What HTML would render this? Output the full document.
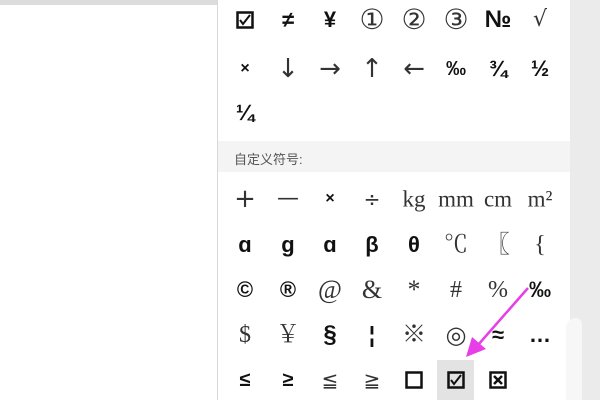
<!DOCTYPE html><html><head><meta charset="utf-8"><style>
body{margin:0;width:600px;height:400px;overflow:hidden;background:#fff;position:relative;font-family:"Liberation Sans","Noto Sans CJK SC",sans-serif}
.s{position:absolute;width:42px;text-align:center;color:#111;line-height:1;transform:translate(-21px,-50%)}
.f{font-family:"Liberation Serif","Noto Serif CJK SC",serif;color:#333;font-weight:normal}
.b{font-weight:bold}
.l{font-family:"DejaVu Sans",sans-serif;font-weight:normal;color:#333}
</style></head><body>
<div style="position:absolute;left:0;top:0;width:217px;height:5px;background:#dcdcdc"></div>
<div style="position:absolute;left:217px;top:0;width:1px;height:400px;background:#d8d8d8"></div>
<div style="position:absolute;left:570px;top:0;width:30px;height:400px;background:#ebebeb"></div>
<div style="position:absolute;left:566px;top:318px;width:16px;height:82px;background:#f7f7f7;border-radius:10px 6px 0 0"></div>
<div style="position:absolute;left:218px;top:141px;width:352px;height:31px;background:#f4f4f4"></div>
<div style="position:absolute;left:234px;top:149px;font-size:13px;color:#555">自定义符号:</div>
<div style="position:absolute;left:437px;top:360px;width:37px;height:40px;background:#e3e3e3"></div>
<div id="g"></div>
<svg style="position:absolute;left:0;top:0" width="600" height="400" fill="none" stroke="#111">
<rect x="237.5" y="12.5" width="15" height="15" stroke-width="2.5"/><path d="M240 20l3 4 7-9" stroke-width="2"/>
<rect x="406.5" y="372.5" width="15" height="15" stroke-width="2.5"/>
<rect x="448.5" y="372.5" width="15" height="15" stroke-width="2.5"/><path d="M451 380l3 4 7-9" stroke-width="2"/>
<rect x="490.5" y="372.5" width="15" height="15" stroke-width="2.5"/><path d="M494 376l8 8M502 376l-8 8" stroke-width="2.5"/>
<line x1="528" y1="288" x2="478" y2="345" stroke="#e83ee8" stroke-width="2.5"/><polygon points="466,357 472,337 486,349" fill="#e83ee8" stroke="none"/></svg>
<script>
const cols=[245,288,330,372,414,456,498,540];
const rows=[
[20,[["",""],["≠","b",22],["¥","b",22],["①","l",28],["②","l",28],["③","l",28],["№","b",24],["√","l",22]]],
[69,[["×","b",16],["↓","l",26],["→","l",26],["↑","l",26],["←","l",26],["‰","b",20],["¾","b",22],["½","b",22]]],
[113,[["¼","b",22]]],
[199,[["+","l",26],["—","l",22],["×","b",16],["÷","l",20],["kg","f",23],["mm","f",23],["cm","f",23],["m²","f",23]]],
[245,[["ɑ","b",22],["g","b",22],["ɑ","b",22],["β","b",22],["θ","b",22],["℃","f",24],["〖","f",24],["{","f",24]]],
[290,[["©","b",22],["®","b",22],["@","f",26],["&","f",26],["*","f",26],["#","f",24],["%","f",24],["‰","b",22]]],
[335,[["$","f",24],["￥","f",24],["§","b",24],["¦","b",22],["※","f",24],["◎","l",24],["≈","b",22],["…","b",22]]],
[380,[["≤","b",20],["≥","b",20],["≦","l",20],["≧","l",20]]]];
let h="";
rows.forEach(r=>r[1].forEach((c,i)=>{if(c[0])h+=`<div class="s ${c[1]}" style="left:${cols[i]}px;top:${r[0]}px;font-size:${c[2]}px">${c[0]}</div>`}));
document.getElementById("g").outerHTML=h;
</script>
</body></html>
